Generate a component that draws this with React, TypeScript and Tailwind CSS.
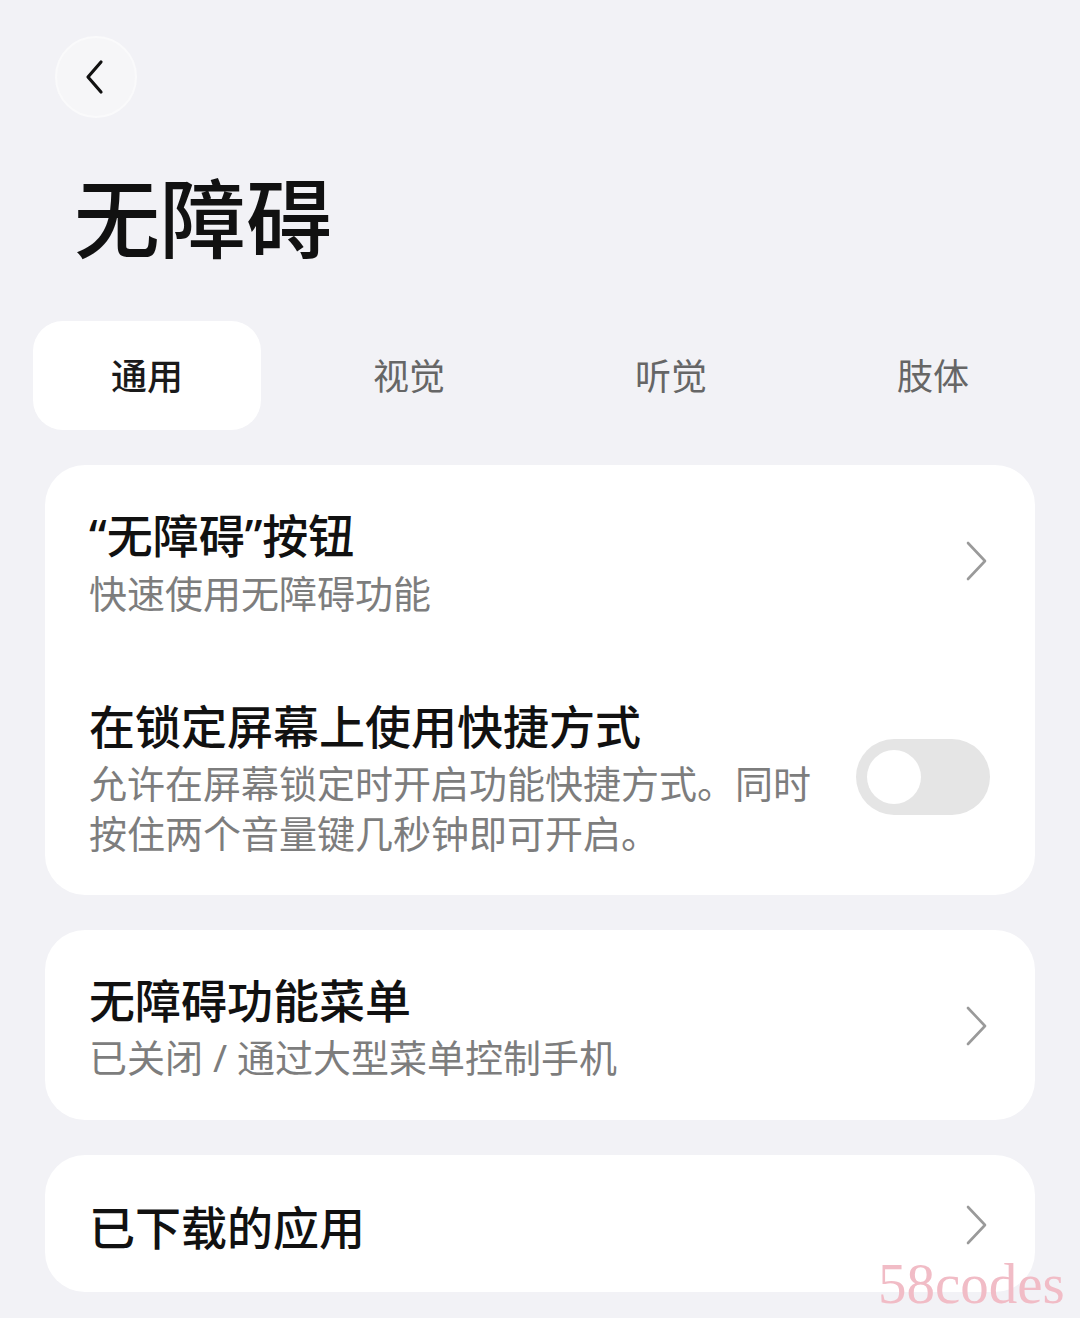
import React from "react";

const cjk = { fontFamily: '"Noto Sans CJK SC", "Noto Sans", sans-serif' };
const latin = { fontFamily: '"Noto Sans", sans-serif' };

function Chevron() {
  return (
    <svg width="28" height="40" viewBox="0 0 28 40" className="shrink-0">
      <path d="M5 2 L22 20 L5 38" fill="none" stroke="#9a9a9a" strokeWidth="2.6" strokeLinecap="round" strokeLinejoin="round" />
    </svg>
  );
}

export default function App() {
  const tabs = ["通用", "视觉", "听觉", "肢体"];
  return (
    <div className="relative w-[1080px] h-[1318px] overflow-hidden bg-[#f2f2f6]" style={cjk}>
      <div className="pt-[36px] pl-[55px]">
        <div className="w-[82px] h-[82px] rounded-full bg-[#f6f6f8] border-2 border-[#fafafb] flex items-center justify-center">
          <svg width="30" height="40" viewBox="0 0 30 40">
            <path d="M20 5 L7 20 L20 35" fill="none" stroke="#111" strokeWidth="3.2" strokeLinecap="round" strokeLinejoin="round" />
          </svg>
        </div>
      </div>

      <div className="pl-[74px] mt-[54px] h-[86px] leading-[86px] text-[86px] font-medium text-[#111]">无障碍</div>

      <div className="mt-[63px] flex pl-[33px] gap-[34px]">
        {tabs.map((t, i) => (
          <div
            key={t}
            className={
              "w-[228px] h-[109px] rounded-[30px] flex items-center justify-center text-[36px] pb-[3px] " +
              (i === 0 ? "bg-white text-[#1a1a1a] font-medium" : "text-[#666]")
            }
          >
            {t}
          </div>
        ))}
      </div>

      <div className="px-[45px] mt-[35px] flex flex-col gap-[35px]">
        <div className="bg-white rounded-[40px] pt-[40px] pb-[38px] pl-[44px] pr-[44px]">
          <div className="flex items-center">
            <div className="flex-1">
              <div className="text-[46px] leading-[56px] font-medium text-[#111]">
                <span style={latin}>“</span>无障碍<span style={latin}>”</span>按钮
              </div>
              <div className="mt-[4px] text-[38px] leading-[50px] text-[#7d7d7d]">快速使用无障碍功能</div>
            </div>
            <Chevron />
          </div>
          <div className="mt-[79px] flex items-center">
            <div className="w-[738px]">
              <div className="text-[46px] leading-[56px] font-medium text-[#111]">在锁定屏幕上使用快捷方式</div>
              <div className="mt-[5px] text-[38px] leading-[50px] text-[#7d7d7d]">
                允许在屏幕锁定时开启功能快捷方式。同时按住两个音量键几秒钟即可开启。
              </div>
            </div>
            <div className="ml-auto mr-[1px] w-[134px] h-[76px] rounded-full bg-[#e5e5e5] flex items-center pl-[11px]">
              <div className="w-[54px] h-[54px] rounded-full bg-white" />
            </div>
          </div>
        </div>

        <div className="bg-white rounded-[40px] pt-[40px] pb-[38px] pl-[44px] pr-[44px] flex items-center">
          <div className="flex-1">
            <div className="text-[46px] leading-[56px] font-medium text-[#111]">无障碍功能菜单</div>
            <div className="mt-[5px] text-[38px] leading-[50px] text-[#7d7d7d]">
              已关闭<span style={latin}> / </span>通过大型菜单控制手机
            </div>
          </div>
          <Chevron />
        </div>

        <div className="bg-white rounded-[40px] pt-[42px] pb-[39px] pl-[44px] pr-[44px] flex items-center">
          <div className="flex-1 text-[46px] leading-[56px] font-medium text-[#111]">已下载的应用</div>
          <Chevron />
        </div>
      </div>

      <div
        className="absolute left-[878px] top-[1252px] text-[57px] leading-[64px] text-[#f1bcc6]"
        style={{ fontFamily: '"Liberation Serif", serif' }}
      >
        58codes
      </div>
    </div>
  );
}
